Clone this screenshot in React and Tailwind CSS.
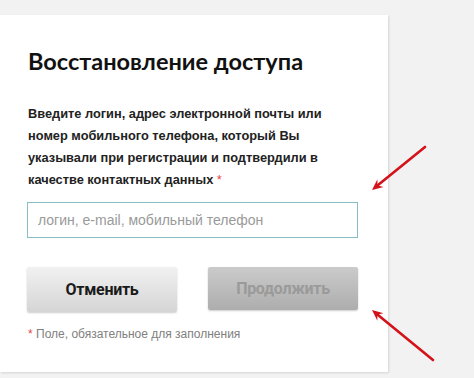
// Восстановление доступа — форма

function Arrow({ x1, y1, x2, y2 }) {
    // наконечник стрелки в точке (x2, y2)
    const ang = Math.atan2(y2 - y1, x2 - x1);
    const len = 12;
    const spread = 0.42;
    const ax = x2 - len * Math.cos(ang - spread);
    const ay = y2 - len * Math.sin(ang - spread);
    const bx = x2 - len * Math.cos(ang + spread);
    const by = y2 - len * Math.sin(ang + spread);
    const mx = x2 - 7 * Math.cos(ang);
    const my = y2 - 7 * Math.sin(ang);
    return (
        <g>
            <line x1={x1} y1={y1} x2={mx} y2={my} stroke="#d4121a" strokeWidth="2.6" strokeLinecap="round" />
            <polygon points={`${x2},${y2} ${ax},${ay} ${mx},${my} ${bx},${by}`} fill="#d4121a" />
        </g>
    );
}

export default function App() {
    return (
        <div className="relative w-[474px] h-[378px] bg-[#f2f2f2] overflow-hidden font-['Liberation_Sans',Arial,sans-serif]">
            <div className="pt-[15px]">
                <div className="w-[388px] h-[357px] bg-white shadow-[1px_1px_2px_rgba(0,0,0,0.12)] pl-[27px] pr-[30px] pt-[29px]">
                    <h1 className="text-[23.5px] leading-[34px] font-bold text-[#111] pl-[1px] font-['Lato','Liberation_Sans',sans-serif]">
                        Восстановление доступа
                    </h1>

                    <p className="mt-[25px] text-[12.8px] leading-[22px] font-bold text-[#222] pl-[1px]">
                        Введите логин, адрес электронной почты или номер мобильного телефона, который Вы указывали при регистрации и подтвердили в качестве контактных данных{" "}
                        <span className="text-[#e04848] font-normal">*</span>
                    </p>

                    <input
                        type="text"
                        placeholder="логин, e-mail, мобильный телефон"
                        className="mt-[11px] block w-[331px] h-[36px] border border-[#86bcc6] px-[10px] text-[14px] outline-none placeholder:text-[#9a9a9a]"
                    />

                    <div className="mt-[29px] flex gap-[31px]">
                        <button className="w-[150px] h-[45px] rounded-[2px] bg-gradient-to-b from-[#f1f1f1] to-[#d5d5d5] shadow-[0_1px_2px_rgba(0,0,0,0.2)] text-[16px] font-bold text-[#1a1a1a] font-['Roboto','Liberation_Sans',sans-serif] tracking-[-0.3px]">
                            Отменить
                        </button>
                        <button className="w-[150px] h-[43px] rounded-[2px] bg-gradient-to-b from-[#cbcbcb] to-[#adadad] shadow-[0_1px_2px_rgba(0,0,0,0.2)] text-[16px] font-bold text-[#9a9a9a] font-['Roboto','Liberation_Sans',sans-serif] tracking-[-0.3px]">
                            Продолжить
                        </button>
                    </div>

                    <p className="mt-[13px] text-[12px] text-[#808080] pl-[1px]">
                        <span className="text-[#e04848]">*</span> Поле, обязательное для заполнения
                    </p>
                </div>
            </div>

            <svg className="absolute inset-0 pointer-events-none" width="474" height="378">
                <Arrow x1={425} y1={147} x2={372} y2={190} />
                <Arrow x1={433} y1={360} x2={372} y2={310} />
            </svg>
        </div>
    );
}
